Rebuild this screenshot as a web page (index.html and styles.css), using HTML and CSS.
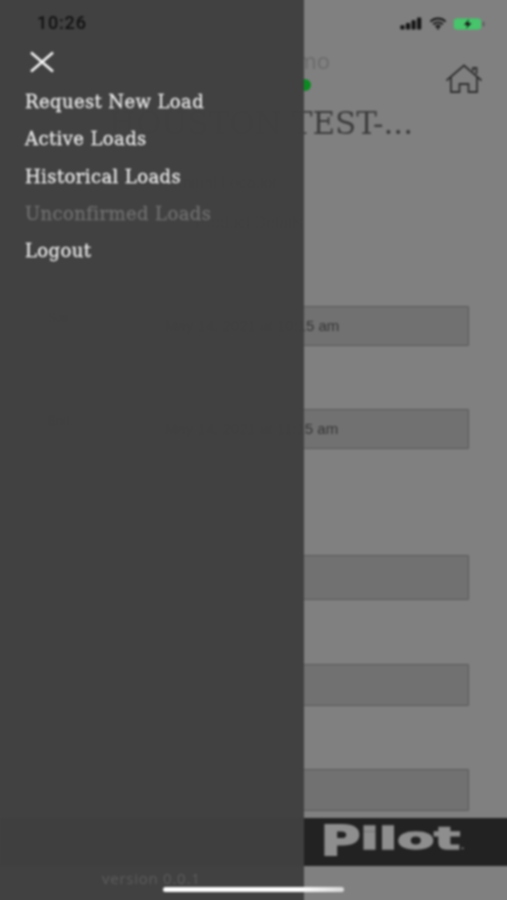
FILE: index.html
```html
<!DOCTYPE html>
<html lang="en">
<head>
<meta charset="utf-8">
<title>Pilot loads menu</title>
<link rel="stylesheet" href="styles.css">
</head>
<body>
<div class="phone">
  <main class="page">
    <div class="status-spacer">
      <svg class="signal" viewBox="0 0 24 14" width="23" height="13" aria-hidden="true"><rect x="0" y="9" width="4.500" height="4.500" rx="1"/><rect x="6" y="6.500" width="4.500" height="7" rx="1"/><rect x="12" y="3.500" width="4.500" height="10" rx="1"/><rect x="18" y="0.500" width="4.500" height="13" rx="1"/></svg>
      <svg class="wifi" viewBox="0 0 20 14" width="18" height="13" aria-hidden="true"><path d="M1.500 5a12 12 0 0 1 17 0M4.500 8a8 8 0 0 1 11 0M7.300 10.800a4 4 0 0 1 5.400 0" fill="none" stroke="#141414" stroke-width="2"/><circle cx="10" cy="12.400" r="1.300" fill="#141414"/></svg>
      <svg class="battery" viewBox="0 0 32 14" width="32" height="14" aria-hidden="true"><rect x="0.500" y="1" width="28" height="12" rx="3.500" fill="#48c46c" stroke="#6f8f78"/><rect x="29.500" y="4.500" width="2" height="5" rx="1" fill="#5a5a5a"/><path d="M16 2l-5 6h3.500l-1.500 4 5.500-6h-3.500z" fill="#111"/></svg>
    </div>
    <header class="head">
      <div class="head-text">
        <div class="name">Demo</div>
        <div class="live"><span class="dot"></span></div>
        <h1 class="title">HOUSTON TEST-...</h1>
      </div>
      <svg class="home" viewBox="0 0 38 32" width="38" height="32" aria-hidden="true"><path d="M1.500 16.500L19 1.500l17.500 15M28 7V4h3.500v6M6 13.500V28h8.500v-8h9v8H32V13.500" fill="none" stroke="#2e2e2e" stroke-width="1.800"/></svg>
    </header>
    <p class="meta meta-first">Terminal Location</p>
    <p class="meta meta-second">Product Details</p>
    <section class="form">
      <div class="field field-a"><span class="field-label">Start</span><span>May 14, 2021 at 10:15 am</span></div>
      <div class="field field-b"><span class="field-label">End</span><span>May 14, 2021 at 11:15 am</span></div>
      <div class="field field-c"></div>
      <div class="field field-d"></div>
      <div class="field field-e"></div>
    </section>
    <footer class="brand"><span class="logo"><span class="logo-p">P</span>ilot<small>.</small></span></footer>
  </main>

  <nav class="drawer">
    <svg class="close" viewBox="0 0 26 22" width="26" height="22" aria-hidden="true"><path d="M2 1.500L24 20.500M24 1.500L2 20.500" fill="none" stroke="#f4f4f4" stroke-width="2.600"/></svg>
    <ul class="menu">
      <li>Request New Load</li>
      <li>Active Loads</li>
      <li>Historical Loads</li>
      <li class="disabled">Unconfirmed Loads</li>
      <li>Logout</li>
    </ul>
    <div class="version">version 0.0.1</div>
  </nav>

  <div class="clock">10:26</div>
  <div class="home-bar"></div>
</div>
</body>
</html>
```
FILE: styles.css
```css
* { box-sizing: border-box; }
html, body { margin: 0; padding: 0; background: #808080; overflow: hidden; height: 900px; }
.phone {
  position: relative;
  width: 515px;
  height: 908px;
  margin: -4px;
  padding: 4px;
  overflow: hidden;
  background: #808080;
  font-family: "Roboto", "Liberation Sans", sans-serif;
  filter: blur(0.8px);
}
.page { width: 507px; height: 900px; display: flex; flex-direction: column; }
.status-spacer {
  height: 47px;
  display: flex;
  justify-content: flex-end;
  align-items: center;
  gap: 6px;
  padding: 0 22px 0 0;
  flex: none;
}
.signal { fill: #141414; }
.head { display: flex; justify-content: space-between; padding: 0 24px 0 102px; height: 104px; flex: none; }
.head-text { position: relative; width: 311px; }
.name { font: 22px/26px "Open Sans", sans-serif; color: #6a6a6a; padding-left: 166px; }
.live { height: 26px; padding-left: 197px; }
.dot { display: block; width: 12px; height: 12px; border-radius: 50%; background: #0c8a22; margin-top: 6px; }
.title {
  margin: 0;
  font: 400 31px/36px "DejaVu Serif", serif;
  color: #3c3c3c;
  white-space: nowrap;
  text-align: right;
}
.home { margin-top: 17px; }
.meta { margin: 0; font: 16px/20px "Liberation Sans", sans-serif; color: #3c3c3c; }
.meta-first { margin-top: 22px; padding-left: 156px; }
.meta-second { margin-top: 20px; padding-left: 195px; }
.form { padding: 0 38px; flex: 1; }
.field {
  border: 1px solid #5a5a5a;
  border-radius: 1px;
  background: #717171;
  font: 15px/38px "Liberation Sans", sans-serif;
  color: #333;
  padding-left: 9px;
  display: flex;
}
.field-label { width: 117px; flex: none; font-size: 12px; line-height: 22px; }
.field-a { height: 40px; margin-top: 73px; }
.field-b { height: 40px; margin-top: 63px; }
.field-c { height: 45px; margin-top: 106px; }
.field-d { height: 42px; margin-top: 64px; }
.field-e { height: 42px; margin-top: 63px; }
.brand {
  flex: none;
  height: 48px;
  margin: 0 -4px 34px 0;
  background: #222;
  display: flex;
  align-items: center;
  justify-content: flex-end;
  padding-right: 46px;
}
.logo {
  display: inline-block;
  font: 700 31px/44px "DejaVu Sans", sans-serif;
  color: #8e8e8e;
  transform: scaleX(1.74);
  transform-origin: right center;
  -webkit-text-stroke: 1.500px #8e8e8e;
}
.logo-p { display: inline-block; transform: scaleY(1.3); transform-origin: center 12px; }
.logo small { font-size: 7px; -webkit-text-stroke: 0; }
.drawer {
  position: absolute;
  left: 0;
  top: 0;
  width: 308px;
  height: 908px;
  background: rgba(64, 64, 64, 0.985);
}
.close { position: absolute; left: 33px; top: 55px; }
.menu {
  list-style: none;
  margin: 0;
  padding: 87px 0 0 29px;
  font: 400 18px/37.300px "DejaVu Serif", serif;
  letter-spacing: 0.400px;
  -webkit-text-stroke: 0.300px;
  color: #e9e9e9;
}
.menu .disabled { color: #6f6f6f; }
.version {
  position: absolute;
  left: 106px;
  top: 873px;
  font: 15px/18px "Open Sans", sans-serif;
  letter-spacing: 0.750px;
  color: #5d5d5d;
}
.clock {
  position: absolute;
  left: 41px;
  top: 17px;
  font: 500 18px/20px "Roboto", sans-serif;
  letter-spacing: 0.800px;
  color: #111;
}
.home-bar {
  position: absolute;
  left: 167px;
  top: 891px;
  width: 181px;
  height: 5px;
  border-radius: 3px;
  background: linear-gradient(to right, #fff 75%, #d8d8d8);
}
```
